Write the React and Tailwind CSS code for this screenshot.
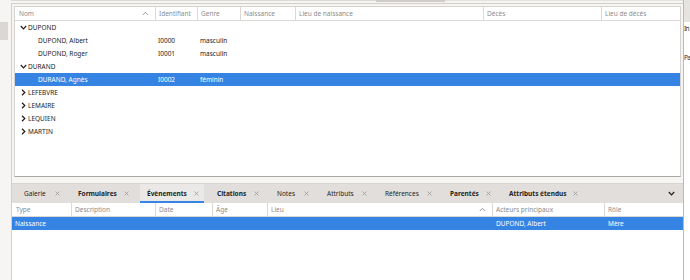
import React from "react";

function ChevronDown({ className = "" }) {
  return (
    <svg width="7" height="5" viewBox="0 0 7 5" className={className}>
      <path d="M0.8 1 L3.5 3.8 L6.2 1" fill="none" stroke="currentColor" strokeWidth="1.2" />
    </svg>
  );
}
function ChevronRight({ className = "" }) {
  return (
    <svg width="5" height="7" viewBox="0 0 5 7" className={className}>
      <path d="M1 0.8 L3.8 3.5 L1 6.2" fill="none" stroke="currentColor" strokeWidth="1.2" />
    </svg>
  );
}
function ChevronUp({ className = "" }) {
  return (
    <svg width="7" height="5" viewBox="0 0 7 5" className={className}>
      <path d="M0.8 4 L3.5 1.3 L6.2 4" fill="none" stroke="currentColor" strokeWidth="0.9" />
    </svg>
  );
}
function CloseX() {
  return (
    <svg width="5" height="5" viewBox="0 0 5 5" className="text-[#9a9a9a]">
      <path d="M0.5 0.5L4.5 4.5M4.5 0.5L0.5 4.5" fill="none" stroke="currentColor" strokeWidth="0.8" />
    </svg>
  );
}

const treeCols = "grid grid-cols-[140px_42px_43px_55px_188px_118px_79px]";
const tableCols = "grid grid-cols-[59px_84px_57px_55px_225px_112px_78px]";

const treeRows = [
  { kind: "group", open: true, label: "DUPOND" },
  { kind: "item", name: "DUPOND, Albert", id: "I0000", genre: "masculin" },
  { kind: "item", name: "DUPOND, Roger", id: "I0001", genre: "masculin" },
  { kind: "group", open: true, label: "DURAND" },
  { kind: "item", name: "DURAND, Agnès", id: "I0002", genre: "féminin", sel: true },
  { kind: "group", open: false, label: "LEFEBVRE" },
  { kind: "group", open: false, label: "LEMAIRE" },
  { kind: "group", open: false, label: "LEQUIEN" },
  { kind: "group", open: false, label: "MARTIN" },
];

const tabs = [
  { label: "Galerie", w: "w-[31px]", bold: false },
  { label: "Formulaires", w: "w-[46px]", bold: true },
  { label: "Évènements", w: "w-[47px]", bold: true, active: true },
  { label: "Citations", w: "w-[37px]", bold: true },
  { label: "Notes", w: "w-[27px]", bold: false },
  { label: "Attributs", w: "w-[35px]", bold: false },
  { label: "Références", w: "w-[42px]", bold: false },
  { label: "Parentés", w: "w-[36px]", bold: true },
  { label: "Attributs étendus", w: "w-[64px]", bold: true },
];

const treeHeaders = ["Identifiant", "Genre", "Naissance", "Lieu de naissance", "Décès", "Lieu de décès"];
const tableHeaders = ["Description", "Date", "Âge"];

export default function App() {
  return (
    <div className="w-[690px] h-[280px] overflow-hidden bg-[#f6f5f4] flex font-['Noto_Sans',sans-serif] text-[6.5px] leading-[13px] text-[#1e1e1e]">
      {/* left strip */}
      <div className="w-[11px] h-full flex flex-col">
        <div className="h-[22px]" />
        <div className="h-[18px] w-[8px] bg-[#dad7d4]" />
      </div>

      {/* main */}
      <div className="w-[672px] h-full flex flex-col">
        <div className="h-[3px] flex">
          <div className="w-[365px] h-[1px] bg-[#dcdad7]" />
          <div className="w-[69px] h-[2px] bg-[#cfccc9]" />
          <div className="flex-1 h-[1px] bg-[#e4e2df]" />
        </div>
        <div className="flex-1 flex flex-col border-l border-t border-[#d3cfcb]">
          <div className="px-[2px] pt-[2px]">
            <div className="h-[171px] bg-white border border-[#d6d2ce] border-b-[#a9a6a3] overflow-hidden">
              {/* header */}
              <div className={`${treeCols} h-[14px] border-b border-[#dcd9d5] text-[#8a8d8e]`}>
                <div className="flex items-center pl-[4px]">
                  <span>Nom</span>
                  <ChevronUp className="ml-auto mr-[6px] text-[#8a8d8e]" />
                </div>
                {treeHeaders.map((h) => (
                  <div key={h} className="border-l border-[#dcd9d5] pl-[3px] flex items-center">
                    {h}
                  </div>
                ))}
              </div>
              {treeRows.map((r, i) =>
                r.kind === "group" ? (
                  <div key={i} className="h-[13px] flex items-center">
                    <div className="w-[13px] pl-[3px] flex items-center justify-center text-[#1e1e1e]">
                      {r.open ? <ChevronDown /> : <ChevronRight />}
                    </div>
                    <span>{r.label}</span>
                  </div>
                ) : (
                  <div
                    key={i}
                    className={`${treeCols} h-[13px] items-center ${r.sel ? "bg-[#3584e4] text-white" : ""}`}
                  >
                    <div className="pl-[23px]">{r.name}</div>
                    <div className="pl-[3px]">{r.id}</div>
                    <div className="pl-[3px]">{r.genre}</div>
                    <div />
                    <div />
                    <div />
                    <div />
                  </div>
                )
              )}
            </div>
          </div>
          <div className="h-[6px]" />

          {/* tab bar */}
          <div className="h-[20px] bg-[#e1dedb] flex items-stretch pl-[5px] border-t border-[#d9d5d1]">
            {tabs.map((t) => (
              <div
                key={t.label}
                className={`flex items-center pl-[7px] pr-[5px] mr-[6px] ${
                  t.active ? "bg-[#ebe9e7] border-b-2 border-[#3584e4] pt-[2px]" : ""
                } ${t.bold ? "font-bold" : ""} text-[#1e1e1e] whitespace-nowrap`}
              >
                <span className={t.w}>{t.label}</span>
                <CloseX />
              </div>
            ))}
            <div className="ml-auto mr-[8px] flex items-center text-[#1e1e1e]">
              <ChevronDown />
            </div>
          </div>

          {/* events table */}
          <div className="flex-1 bg-white">
            <div className={`${tableCols} h-[14px] border-b border-[#dcd9d5] text-[#8a8d8e]`}>
              <div className="pl-[4px] flex items-center">Type</div>
              {tableHeaders.map((h) => (
                <div key={h} className="border-l border-[#dcd9d5] pl-[3px] flex items-center">
                  {h}
                </div>
              ))}
              <div className="border-l border-[#dcd9d5] pl-[3px] flex items-center">
                <span>Lieu</span>
                <ChevronUp className="ml-auto mr-[6px]" />
              </div>
              <div className="border-l border-[#dcd9d5] pl-[3px] flex items-center">Acteurs principaux</div>
              <div className="border-l border-[#dcd9d5] pl-[3px] flex items-center">Rôle</div>
            </div>
            <div className={`${tableCols} h-[13px] items-center bg-[#3584e4] text-white`}>
              <div className="pl-[3px]">Naissance</div>
              <div />
              <div />
              <div />
              <div />
              <div className="pl-[4px]">DUPOND, Albert</div>
              <div className="pl-[4px]">Mère</div>
            </div>
          </div>
        </div>
      </div>

      {/* right strip */}
      <div className="w-[7px] h-full border-l border-[#bdb9b5] bg-white overflow-hidden flex flex-col">
        <div className="h-[22px] bg-[#e6e4e1] shrink-0" />
        <div className="h-[15px] shrink-0 whitespace-nowrap tracking-[-0.6px]">In</div>
        <div className="h-[14px] shrink-0" />
        <div className="h-[15px] shrink-0 whitespace-nowrap tracking-[-0.6px]">Pa</div>
      </div>
    </div>
  );
}
